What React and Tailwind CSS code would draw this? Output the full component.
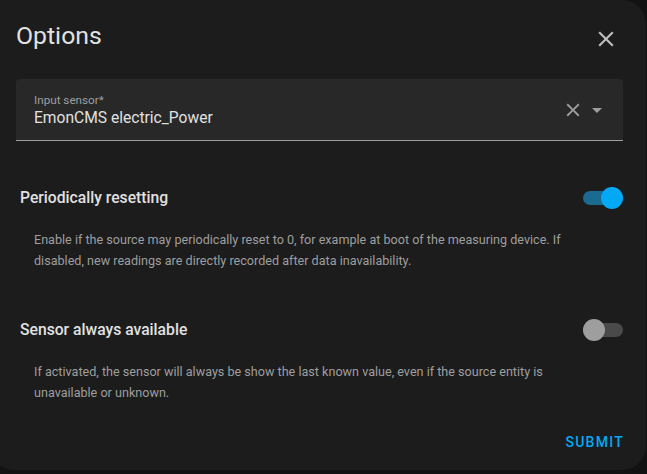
import { useState } from "react";

const Toggle = ({ on, onChange }) => {
  return (
    <button
      type="button"
      onClick={() => onChange(!on)}
      className="relative w-[40px] h-[22px] shrink-0"
    >
      <span
        className={
          on
            ? "absolute left-0 top-[4px] w-[37px] h-[14px] rounded-full bg-[#1a6a92]"
            : "absolute left-0 top-[4px] w-[40px] h-[14px] rounded-full bg-[#4a4a4a]"
        }
      />
      <span
        className={
          on
            ? "absolute left-[18px] top-0 w-[22px] h-[22px] rounded-full bg-[#03a9f4]"
            : "absolute left-0 top-0 w-[22px] h-[22px] rounded-full bg-[#9e9e9e]"
        }
      />
    </button>
  );
};

const OptionRow = ({ title, description, on, onChange, className }) => {
  return (
    <div className={className}>
      <div className="flex items-center justify-between h-[24px] pl-[4px]">
        <span className="text-[15.7px] leading-[24px] font-medium text-[#e1e1e1]">
          {title}
        </span>
        <Toggle on={on} onChange={onChange} />
      </div>
      <p className="mt-[19px] pl-[18px] pr-[20px] text-[12.6px] leading-[21px] text-[#9e9e9e]">
        {description}
      </p>
    </div>
  );
};

const App = () => {
  const [resetting, setResetting] = useState(true);
  const [available, setAvailable] = useState(false);

  return (
    <div className="min-h-screen bg-[#121212] overflow-hidden font-['Roboto',_sans-serif]">
      <div className="ml-[-10px] w-[656px] h-[470px] bg-[#1c1c1c] rounded-[24px] rounded-tl-none pl-[26px] pr-[23px] pt-[20px] flex flex-col">
        <div className="flex items-center justify-between h-[32px]">
          <h2 className="text-[24.8px] leading-[32px] text-[#e1e1e1]">Options</h2>
          <button
            type="button"
            className="w-[34px] h-[34px] mt-[5px] flex items-center justify-center text-[#bdbdbd]"
          >
            <svg width="26" height="26" viewBox="0 0 24 24" fill="currentColor">
              <path d="M19,6.41L17.59,5L12,10.59L6.41,5L5,6.41L10.59,12L5,17.59L6.41,19L12,13.41L17.59,19L19,17.59L13.41,12L19,6.41Z" />
            </svg>
          </button>
        </div>

        <div className="mt-[27px] h-[62px] bg-[#282828] rounded-t-[4px] border-b border-[#9e9e9e] pl-[18px] pr-[14px] flex items-center">
          <div className="flex-1 flex flex-col">
            <span className="text-[11.7px] leading-[16px] text-[#9e9e9e]">
              Input sensor*
            </span>
            <span className="text-[15.6px] leading-[20px] text-[#e1e1e1]">
              EmonCMS electric_Power
            </span>
          </div>
          <div className="flex items-center text-[#9e9e9e]">
            <svg width="22" height="22" viewBox="0 0 24 24" fill="currentColor" className="mx-[1px]">
              <path d="M19,6.41L17.59,5L12,10.59L6.41,5L5,6.41L10.59,12L5,17.59L6.41,19L12,13.41L17.59,19L19,17.59L13.41,12L19,6.41Z" />
            </svg>
            <svg width="24" height="24" viewBox="0 0 24 24" fill="currentColor">
              <path d="M7,10L12,15L17,10H7Z" />
            </svg>
          </div>
        </div>

        <OptionRow
          className="mt-[45px]"
          title="Periodically resetting"
          description="Enable if the source may periodically reset to 0, for example at boot of the measuring device. If disabled, new readings are directly recorded after data inavailability."
          on={resetting}
          onChange={setResetting}
        />

        <OptionRow
          className="mt-[47px]"
          title="Sensor always available"
          description="If activated, the sensor will always be show the last known value, even if the source entity is unavailable or unknown."
          on={available}
          onChange={setAvailable}
        />

        <div className="mt-[21px] flex justify-end">
          <button
            type="button"
            className="h-[36px] text-[14px] font-medium tracking-[1.25px] uppercase text-[#03a9f4] mr-[-1px]"
          >
            Submit
          </button>
        </div>
      </div>
    </div>
  );
};

export default App;
